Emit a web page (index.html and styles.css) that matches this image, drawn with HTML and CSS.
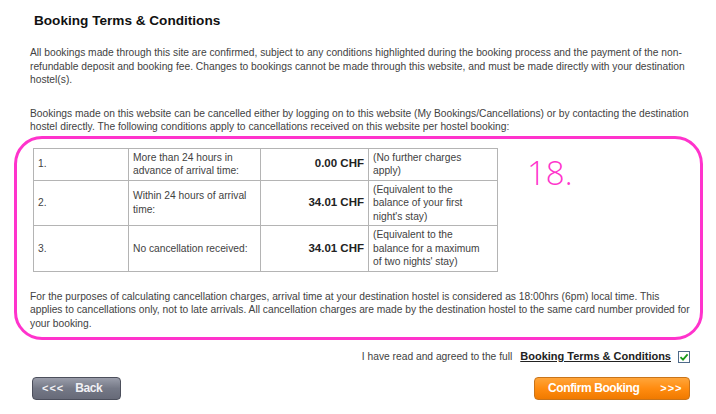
FILE: index.html
```html
<!DOCTYPE html>
<html lang="en">
<head>
    <meta charset="UTF-8">
    <meta name="viewport" content="width=device-width, initial-scale=1.0">
    <title>Booking Terms &amp; Conditions</title>
    <link rel="stylesheet" href="styles.css">
</head>
<body>
    <div class="page">
        <h1>Booking Terms &amp; Conditions</h1>

        <p class="first">All bookings made through this site are confirmed, subject to any conditions highlighted during the booking process and the payment of the non-refundable deposit and booking fee. Changes to bookings cannot be made through this website, and must be made directly with your destination hostel(s).</p>

        <p>Bookings made on this website can be cancelled either by logging on to this website (My Bookings/Cancellations) or by contacting the destination hostel directly. The following conditions apply to cancellations received on this website per hostel booking:</p>

        <div class="highlight">
            <span class="note">18.</span>
            <table class="charges">
                <tr class="row-short">
                    <td class="num">1.</td>
                    <td class="when">More than 24 hours in advance of arrival time:</td>
                    <td class="amount">0.00 CHF</td>
                    <td class="info">(No further charges apply)</td>
                </tr>
                <tr>
                    <td class="num">2.</td>
                    <td class="when">Within 24 hours of arrival time:</td>
                    <td class="amount">34.01 CHF</td>
                    <td class="info">(Equivalent to the balance of your first night's stay)</td>
                </tr>
                <tr>
                    <td class="num">3.</td>
                    <td class="when">No cancellation received:</td>
                    <td class="amount">34.01 CHF</td>
                    <td class="info">(Equivalent to the balance for a maximum of two nights' stay)</td>
                </tr>
            </table>

            <p class="last">For the purposes of calculating cancellation charges, arrival time at your destination hostel is considered as 18:00hrs (6pm) local time. This applies to cancellations only, not to late arrivals. All cancellation charges are made by the destination hostel to the same card number provided for your booking.</p>
        </div>

        <div class="agree">
            <span>I have read and agreed to the full</span>
            <a href="#" class="terms-link">Booking Terms &amp; Conditions</a>
            <span class="checkbox">
                <svg width="10" height="10" viewBox="0 0 10 10">
                    <path d="M1.5 5.2 L4 7.6 L8.6 2.4" fill="none" stroke="#1a9a1a" stroke-width="1.8"/>
                </svg>
            </span>
        </div>

        <div class="actions">
            <button class="btn btn-back"><span class="arrows">&lt;&lt;&lt;</span> Back</button>
            <button class="btn btn-confirm">Confirm Booking <span class="arrows">&gt;&gt;&gt;</span></button>
        </div>
    </div>
</body>
</html>
```

FILE: styles.css
```css
/* Booking terms page */
body {
    margin: 0;
    padding: 0;
    background-color: #fff;
    color: #424242;
    font-family: "Liberation Sans", Arial, sans-serif;
    font-size: 10.25px;
    line-height: 13.5px;
}

.page {
    width: 660px;
    padding: 12px 0 0 30px;
}

h1 {
    margin: 0 0 0 4px;
    font-size: 13.6px;
    line-height: 17px;
    color: #111;
}

p {
    margin: 0;
}

p.first {
    margin-top: 17px;
    margin-bottom: 20px;
}

.highlight {
    position: relative;
    margin: 2px -13px 0 -16px;
    padding: 9px 10px 7px 13px;
    border: 3px solid #ff33cc;
    border-radius: 28px;
}

.note {
    position: absolute;
    left: 510px;
    top: 14px;
    font-family: "Open Sans", sans-serif;
    font-weight: 300;
    font-size: 33px;
    line-height: 40px;
    color: #ff33cc;
}

.charges {
    margin-left: 3px;
    border-collapse: collapse;
    width: 465px;
}

.charges td {
    border: 1px solid #b4b4b4;
    padding: 2px 4px;
    vertical-align: middle;
    height: 40px;
}

.charges .row-short td {
    height: 27px;
}

.num {
    width: 86px;
}

.when {
    width: 123px;
}

.amount {
    width: 99px;
    text-align: right;
    font-weight: bold;
    color: #222;
    font-size: 11.5px;
}

.charges td.info {
    width: 110px;
    padding-right: 14px;
}

p.last {
    margin-top: 18px;
}

.agree {
    display: flex;
    justify-content: flex-end;
    align-items: center;
    margin-top: 10px;
}

.terms-link {
    margin-left: 8px;
    color: #222;
    font-weight: bold;
    font-size: 11px;
    text-decoration: underline;
}

.checkbox {
    display: inline-flex;
    align-items: center;
    justify-content: center;
    width: 10px;
    height: 10px;
    margin-left: 7px;
    border: 1px solid #4e6a8a;
    background: #fff;
}

.actions {
    display: flex;
    justify-content: space-between;
    margin-top: 13px;
}

.btn {
    box-sizing: border-box;
    height: 23px;
    padding: 0;
    border-radius: 4px;
    color: #fff;
    font-family: "Liberation Sans", Arial, sans-serif;
    font-size: 12px;
    letter-spacing: -0.4px;
    line-height: 21px;
    font-weight: bold;
    text-align: left;
    white-space: nowrap;
    cursor: pointer;
}

.btn .arrows {
    font-size: 11px;
    letter-spacing: 1px;
}

.btn-back {
    width: 89px;
    margin-left: 2px;
    padding-left: 9px;
    border: 1px solid #4c4f5c;
    background: linear-gradient(#9a9daa, #747886 50%, #676a78);
    color: #f0f0f4;
}

.btn-back .arrows {
    margin-right: 8px;
}

.btn-confirm {
    width: 156px;
    padding-left: 13px;
    border: 1px solid #c9741a;
    background: linear-gradient(#ffa53a, #ff8c10 50%, #f07a00);
}

.btn-confirm .arrows {
    margin-left: 18px;
}
```
